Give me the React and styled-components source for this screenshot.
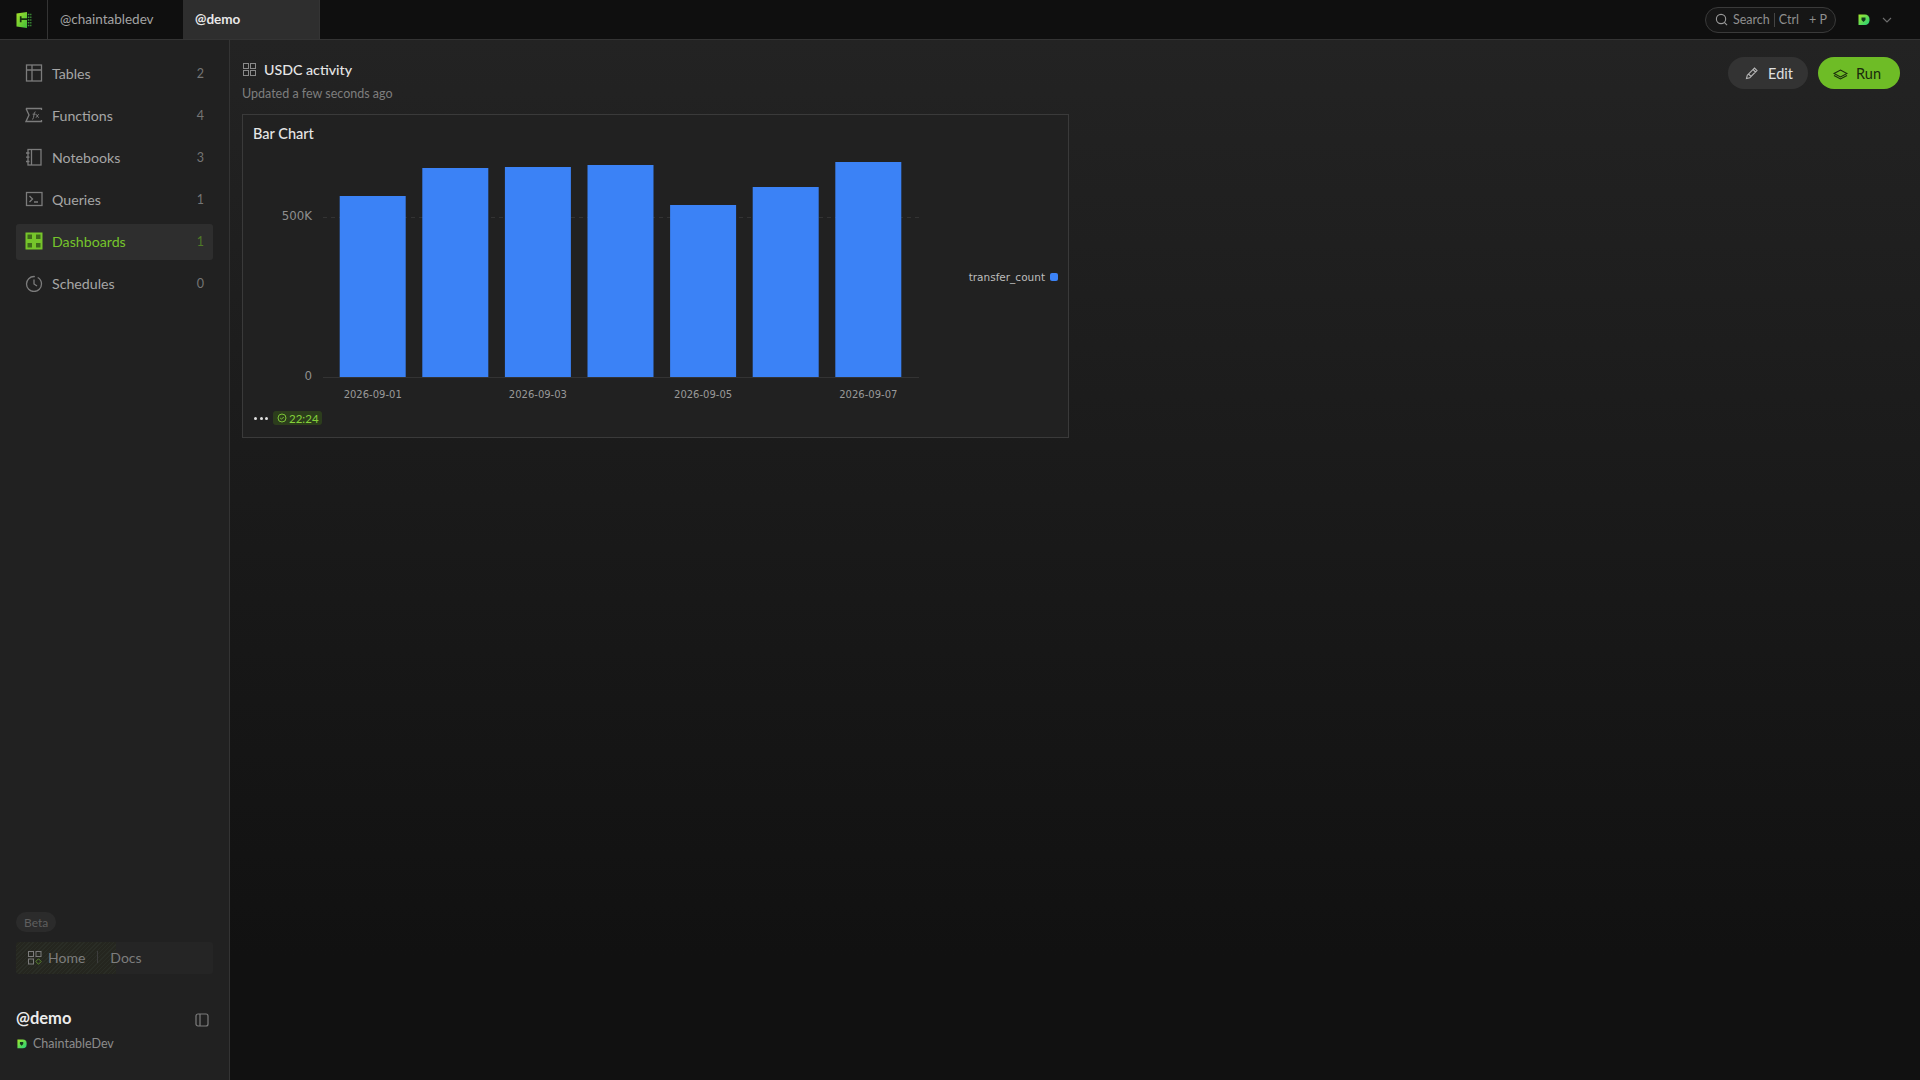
import React from "react";
import styled, { createGlobalStyle } from "styled-components";

const Global = createGlobalStyle`
  html, body { margin: 0; padding: 0; background: #111; }
  * { box-sizing: border-box; }
  body { font-family: "Lato", "Open Sans", "Liberation Sans", sans-serif; color: #ddd; }
`;

const Page = styled.div`
  width: 1920px;
  height: 1080px;
  overflow: hidden;
  display: flex;
  flex-direction: column;
`;

const TopBar = styled.header`
  height: 40px;
  flex: none;
  display: flex;
  align-items: stretch;
  background: #0f0f0f;
  border-bottom: 1px solid #343434;
`;

const LogoCell = styled.div`
  width: 48px;
  display: flex;
  align-items: center;
  justify-content: center;
  border-right: 1px solid #343434;
`;

const Tab = styled.div`
  width: ${(p) => (p.$active ? "137px" : "135px")};
  display: flex;
  align-items: center;
  padding: 0 0 1px 12px;
  font-size: 13.5px;
  color: ${(p) => (p.$active ? "#e8e8e8" : "#a3a3a3")};
  font-weight: ${(p) => (p.$active ? 700 : 400)};
  background: ${(p) => (p.$active ? "#2e2e2e" : "transparent")};
  border-right: ${(p) => (p.$active ? "1px solid #343434" : "none")};
`;

const TopRight = styled.div`
  margin-left: auto;
  display: flex;
  align-items: center;
  padding-right: 28px;
`;

const SearchBox = styled.div`
  width: 131px;
  height: 26px;
  border: 1px solid #3a3a3a;
  border-radius: 13px;
  display: flex;
  align-items: center;
  padding-left: 9px;
  font-size: 12.5px;
  color: #8f8f8f;
  background: #161616;
`;

const SearchWord = styled.span`
  margin-left: 5px;
`;

const SearchSep = styled.span`
  width: 1px;
  height: 14px;
  background: #444;
  margin: 0 4px;
`;

const SearchKey = styled.span`
  margin-left: ${(p) => p.$gap || 0}px;
`;

const AccountMark = styled.div`
  margin-left: 22px;
  display: flex;
  align-items: center;
  gap: 12px;
`;

const Body = styled.div`
  flex: 1;
  display: flex;
  min-height: 0;
`;

const Sidebar = styled.aside`
  width: 230px;
  flex: none;
  background: #212121;
  border-right: 1px solid #343434;
  padding: 16px 16px 0;
  display: flex;
  flex-direction: column;
`;

const Nav = styled.nav`
  display: flex;
  flex-direction: column;
  gap: 6px;
`;

const NavItem = styled.div`
  height: 36px;
  display: flex;
  align-items: center;
  padding: 0 9px 2px;
  border-radius: 3px;
  font-size: 14.2px;
  color: ${(p) => (p.$active ? "#76c52b" : "#a6a6a6")};
  background: ${(p) => (p.$active ? "#2e2e2e" : "transparent")};
`;

const NavLabel = styled.span`
  margin-left: 9px;
  flex: 1;
`;

const NavCount = styled.span`
  font-size: 12.5px;
  color: ${(p) => (p.$active ? "#4f7a28" : "#757575")};
`;

const Spacer = styled.div`
  flex: 1;
`;

const BetaTag = styled.div`
  align-self: flex-start;
  height: 20px;
  padding: 0 8px;
  border-radius: 10px;
  background: #2b2b2b;
  color: #5f5f5f;
  font-size: 12px;
  display: flex;
  align-items: center;
`;

const HomeBar = styled.div`
  height: 32px;
  margin-top: 10px;
  padding: 0 11px 2px;
  display: flex;
  align-items: center;
  border-radius: 3px;
  font-size: 14px;
  color: #7d7d7d;
  background: repeating-linear-gradient(135deg, #2a2d26 0 1px, #25261f 1px 3px) left/100px 100% no-repeat, #252525;
`;

const HomeLabel = styled.span`
  margin-left: 6px;
`;

const HomeSep = styled.span`
  width: 1px;
  height: 12px;
  background: #3d3d3d;
  margin: 0 12px;
`;

const UserBlock = styled.div`
  margin-top: 34px;
  height: 72px;
`;

const UserRow = styled.div`
  display: flex;
  align-items: center;
  justify-content: space-between;
  padding-right: 4px;
`;

const UserName = styled.div`
  font-size: 16.5px;
  font-weight: 700;
  color: #ececec;
`;

const PanelToggle = styled.span`
  display: flex;
  margin-top: 3px;
`;

const OrgRow = styled.div`
  margin-top: 8px;
  display: flex;
  align-items: center;
  gap: 6px;
  padding-left: 1px;
  font-size: 12.5px;
  color: #8c8c8c;
`;

const Main = styled.main`
  flex: 1;
  padding: 16px 20px 0 12px;
  background: linear-gradient(180deg, #232323 0%, #111111 88%);
`;

const HeaderRow = styled.div`
  display: flex;
  justify-content: space-between;
  align-items: flex-start;
  height: 58px;
`;

const TitleBlock = styled.div`
  padding-top: 5px;
`;

const TitleRow = styled.div`
  display: flex;
  align-items: center;
  gap: 8px;
  padding-left: 1px;
  font-size: 14.2px;
  font-weight: 500;
  color: #e6e6e6;
`;

const Subtitle = styled.div`
  margin-top: 8px;
  font-size: 12.5px;
  color: #7e7e7e;
`;

const Actions = styled.div`
  display: flex;
  gap: 10px;
  margin-top: 1px;
`;

const PillButton = styled.button`
  height: 32px;
  width: ${(p) => (p.$primary ? "82px" : "80px")};
  padding: ${(p) => (p.$primary ? "0 4px 0 0" : "0 0 0 2px")};
  border: none;
  border-radius: 16px;
  display: flex;
  align-items: center;
  justify-content: center;
  gap: ${(p) => (p.$primary ? "8px" : "9px")};
  font: inherit;
  font-size: 14.5px;
  color: ${(p) => (p.$primary ? "#1a2a0c" : "#e0e0e0")};
  background: ${(p) => (p.$primary ? "#6ebc26" : "#333333")};
`;

const Card = styled.section`
  width: 827px;
  height: 324px;
  border: 1px solid #3a3a3a;
  background: #212121;
  display: flex;
  flex-direction: column;
  padding: 0 10px;
`;

const CardTitle = styled.div`
  margin-top: 10px;
  height: 18px;
  line-height: 18px;
  font-size: 14.5px;
  font-weight: 500;
  color: #e6e6e6;
`;

const ChartArea = styled.div`
  display: flex;
  align-items: flex-start;
`;

const ChartSvg = styled.svg`
  flex: none;
  display: block;
`;

const Legend = styled.div`
  margin-top: 128px;
  margin-left: auto;
  display: flex;
  align-items: center;
  gap: 5px;
  font-family: "DejaVu Sans", sans-serif;
  font-size: 10.5px;
  color: #bdbdbd;
`;

const LegendSwatch = styled.span`
  width: 8px;
  height: 8px;
  border-radius: 2px;
  background: #3b82f6;
`;

const CardFooter = styled.div`
  display: flex;
  align-items: center;
  gap: 5px;
  padding-left: 1px;
`;

const Dots = styled.span`
  display: flex;
  gap: 2.5px;
`;

const Dot = styled.i`
  width: 3px;
  height: 3px;
  border-radius: 50%;
  background: #e0e0e0;
`;

const TimeBadge = styled.span`
  height: 14px;
  width: 49px;
  padding-left: 4px;
  border-radius: 3px;
  display: flex;
  align-items: center;
  gap: 2px;
  background: #2c3d1c;
  color: #84d13a;
  font-size: 11.5px;
`;

const Ico = ({ children, size = 18, color = "#8a8a8a", sw = 1.2, vb = 18 }) => (
  <svg width={size} height={size} viewBox={`0 0 ${vb} ${vb}`} fill="none" stroke={color} strokeWidth={sw}>
    {children}
  </svg>
);

const navItems = [
  {
    label: "Tables",
    count: 2,
    icon: (
      <>
        <rect x="1.5" y="1" width="15" height="16" />
        <path d="M1.5 6h15M7 1v16" />
      </>
    ),
  },
  {
    label: "Functions",
    count: 4,
    icon: (
      <>
        <path d="M1 2.5h15.5v1.5M16.5 14v1.5H1l3-6.5-3-6.5" />
        <path d="M7 13c1 .3 1.3-.3 1.5-1.5l.8-4.5c.2-1 .7-1.3 1.4-1M7.6 8.2h3M11 8.2l2.6 3.5M13.6 8.2L11 11.7" strokeWidth="1" />
      </>
    ),
  },
  {
    label: "Notebooks",
    count: 3,
    icon: (
      <>
        <rect x="3" y="1.5" width="13" height="15.5" />
        <path d="M6.5 1.5V17M1 5h3.5M1 9.2h3.5M1 13.5h3.5" />
      </>
    ),
  },
  {
    label: "Queries",
    count: 1,
    icon: (
      <>
        <rect x="1.5" y="2.5" width="15.5" height="13" />
        <path d="M4.5 6l3 3-3 3M9 12h4" />
      </>
    ),
  },
  {
    label: "Dashboards",
    count: 1,
    active: true,
    icon: (
      <>
        <rect x="1.5" y="1.5" width="6.5" height="6.5" fill="#3f6a1a" />
        <rect x="10" y="1.5" width="6.5" height="6.5" fill="#3f6a1a" />
        <rect x="1.5" y="10" width="6.5" height="6.5" fill="#3f6a1a" />
        <rect x="10" y="10" width="6.5" height="6.5" fill="#3f6a1a" />
      </>
    ),
  },
  {
    label: "Schedules",
    count: 0,
    icon: (
      <>
        <circle cx="9" cy="10" r="7.5" strokeDasharray="36 3" />
        <path d="M9 5.5V10l3 2" />
      </>
    ),
  },
];

const bars = [196, 168, 167, 165, 205, 187, 162];
const dates = ["2026-09-01", "2026-09-03", "2026-09-05", "2026-09-07"];

// page y of the svg's top edge, bar tops above are page coords
const CHART_TOP = 143;

const BarChart = () => (
  <ChartSvg width="700" height="268" viewBox="0 0 700 268">
    <g stroke="#333" strokeWidth="1">
      <line x1="70" x2="666" y1="74.5" y2="74.5" strokeDasharray="4 4" />
      <line x1="70" x2="666" y1="234.5" y2="234.5" />
    </g>
    {bars.map((top, i) => (
      <rect key={i} x={86.7 + i * 82.6} y={top - CHART_TOP} width="66" height={377 - top} fill="#3b82f6" />
    ))}
    <g fontFamily="DejaVu Sans, sans-serif" fontSize="11.8" fill="#8f8f8f" textAnchor="end">
      <text x="59" y="77">500K</text>
      <text x="59" y="237">0</text>
    </g>
    <g fontFamily="DejaVu Sans, sans-serif" fontSize="10" fill="#999" textAnchor="middle">
      {dates.map((d, i) => (
        <text key={d} x={119.7 + i * 165.2} y="255">{d}</text>
      ))}
    </g>
  </ChartSvg>
);

const BrandMark = ({ size = 12, id }) => (
  <svg width={size} height={size} viewBox="0 0 12 12">
    <defs>
      <linearGradient id={id} x1="0" y1="0" x2="1" y2="1">
        <stop offset="0" stopColor="#a5e82c" />
        <stop offset="1" stopColor="#1fd07a" />
      </linearGradient>
    </defs>
    <path d="M0.5 0.5h6.5a4.5 4.5 0 0 1 4.5 4.5v1.5a4.5 4.5 0 0 1-4.5 4.5H0.5z" fill={`url(#${id})`} />
    <path d="M3.5 3.5h4v2.5L5.5 8 3.5 6z" fill="#123a20" />
  </svg>
);

export default function App() {
  return (
    <Page>
      <Global />
      <TopBar>
        <LogoCell>
          <svg width="16" height="16" viewBox="0 0 16 16">
            <defs>
              <linearGradient id="logoFill" x1="0" y1="0" x2="1" y2="1">
                <stop offset="0" stopColor="#a8e02a" />
                <stop offset="1" stopColor="#3fbf3a" />
              </linearGradient>
            </defs>
            <path d="M0.5 1.5L11 0v16L0.5 14.5z" fill="url(#logoFill)" />
            <path d="M4.7 4.2v6M4.7 7.2H11" stroke="#16310f" strokeWidth="1.7" fill="none" />
            <path d="M11.8 2.5h4M11.8 5.2h4M11.8 8h4M11.8 10.7h4M11.8 13.4h4" stroke="#3f9a3a" strokeWidth="1.5" strokeDasharray="1.2 0.6" />
          </svg>
        </LogoCell>
        <Tab>@chaintabledev</Tab>
        <Tab $active>@demo</Tab>
        <TopRight>
          <SearchBox>
            <Ico size={13} vb={14} color="#9a9a9a" sw={1.2}>
              <circle cx="6.5" cy="6.5" r="5" />
              <path d="M10 10l3 3" />
            </Ico>
            <SearchWord>Search</SearchWord>
            <SearchSep />
            <span>Ctrl</span>
            <SearchKey $gap={10}>+ P</SearchKey>
          </SearchBox>
          <AccountMark>
            <BrandMark size={12} id="brandTop" />
            <svg width="10" height="6" viewBox="0 0 10 6" fill="none" stroke="#6e6e6e" strokeWidth="1.1">
              <path d="M1 1l4 4 4-4" />
            </svg>
          </AccountMark>
        </TopRight>
      </TopBar>
      <Body>
        <Sidebar>
          <Nav>
            {navItems.map((n) => (
              <NavItem key={n.label} $active={n.active}>
                <Ico color={n.active ? "#76c52b" : "#7c7c7c"} sw={n.active ? 2 : 1.3}>{n.icon}</Ico>
                <NavLabel>{n.label}</NavLabel>
                <NavCount $active={n.active}>{n.count}</NavCount>
              </NavItem>
            ))}
          </Nav>
          <Spacer />
          <BetaTag>Beta</BetaTag>
          <HomeBar>
            <Ico size={15} vb={15} color="#7c7c7c" sw={1}>
              <rect x="1.5" y="1.5" width="5" height="5" />
              <rect x="9" y="1.5" width="5" height="5" />
              <rect x="1.5" y="9" width="5" height="5" />
              <path d="M11.5 8.8l2.7 2.7-2.7 2.7-2.7-2.7z" stroke="#5d8a30" />
            </Ico>
            <HomeLabel>Home</HomeLabel>
            <HomeSep />
            <span>Docs</span>
          </HomeBar>
          <UserBlock>
            <UserRow>
              <UserName>@demo</UserName>
              <PanelToggle>
                <Ico size={14} vb={14} color="#7c7c7c" sw={1.2}>
                  <rect x="1" y="1" width="12" height="12" rx="2" />
                  <path d="M5 1v12" />
                </Ico>
              </PanelToggle>
            </UserRow>
            <OrgRow>
              <BrandMark size={10} id="brandOrg" />
              ChaintableDev
            </OrgRow>
          </UserBlock>
        </Sidebar>
        <Main>
          <HeaderRow>
            <TitleBlock>
              <TitleRow>
                <Ico size={13} vb={13} color="#8a8a8a" sw={1}>
                  <rect x="0.5" y="0.5" width="5" height="5" />
                  <rect x="7.5" y="0.5" width="5" height="5" />
                  <rect x="0.5" y="7.5" width="5" height="5" />
                  <rect x="7.5" y="7.5" width="5" height="5" />
                </Ico>
                USDC activity
              </TitleRow>
              <Subtitle>Updated a few seconds ago</Subtitle>
            </TitleBlock>
            <Actions>
              <PillButton>
                <Ico size={14} vb={14} color="#b5b5b5" sw={1.1}>
                  <path d="M1.5 12.5l.8-3.3L9.5 2l2.5 2.5-7.2 7.2zM8 3.5L10.5 6M3.5 8l2.5 2.5" />
                </Ico>
                Edit
              </PillButton>
              <PillButton $primary>
                <Ico size={15} vb={15} color="#1a2a0c" sw={1.1}>
                  <path d="M1 7.5L7.5 4 14 7.5 7.5 11zM1 9.5L7.5 13 14 9.5" />
                </Ico>
                Run
              </PillButton>
            </Actions>
          </HeaderRow>
          <Card>
            <CardTitle>Bar Chart</CardTitle>
            <ChartArea>
              <BarChart />
              <Legend>
                transfer_count
                <LegendSwatch />
              </Legend>
            </ChartArea>
            <CardFooter>
              <Dots>
                <Dot />
                <Dot />
                <Dot />
              </Dots>
              <TimeBadge>
                <svg width="10" height="10" viewBox="0 0 10 10" fill="none" stroke="#84d13a" strokeWidth="0.9">
                  <circle cx="5" cy="5" r="4" />
                  <path d="M3.2 5l1.3 1.2 2.2-2.2" />
                </svg>
                22:24
              </TimeBadge>
            </CardFooter>
          </Card>
        </Main>
      </Body>
    </Page>
  );
}
